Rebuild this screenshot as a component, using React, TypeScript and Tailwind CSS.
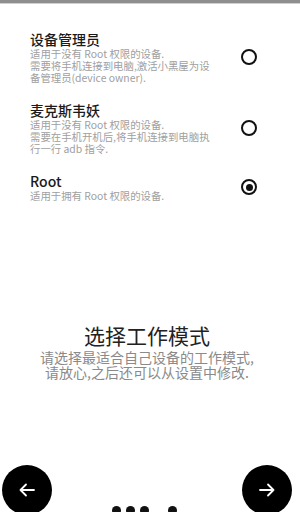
import React from "react";

const items = [
  {
    title: "设备管理员",
    desc: ["适用于没有 Root 权限的设备.", "需要将手机连接到电脑,激活小黑屋为设", "备管理员(device owner)."],
    selected: false,
  },
  {
    title: "麦克斯韦妖",
    desc: ["适用于没有 Root 权限的设备.", "需要在手机开机后,将手机连接到电脑执", "行一行 adb 指令."],
    selected: false,
  },
  {
    title: "Root",
    desc: ["适用于拥有 Root 权限的设备."],
    selected: true,
  },
];

function Radio({ selected }: { selected: boolean }) {
  return (
    <div className="w-[16px] h-[16px] rounded-full border-2 border-[#111] flex items-center justify-center shrink-0">
      {selected && <div className="w-[7px] h-[7px] rounded-full bg-[#111]" />}
    </div>
  );
}

export default function App() {
  return (
    <div
      className="w-[300px] h-[512px] overflow-hidden bg-white flex flex-col"
      style={{ fontFamily: '"Noto Sans CJK SC", "Noto Sans", sans-serif' }}
    >
      <div className="h-[4px] bg-[#8e8e8e] border-b border-[#d0d0d0] shrink-0" />
      <div className="pt-[26px] pl-[30px] pr-[43px] flex flex-col gap-[17px]">
        {items.map((it) => (
          <div key={it.title} className="flex items-center justify-between">
            <div className="flex flex-col">
              <div className="text-[14px] leading-[18px] text-[#1a1a1a] font-medium">{it.title}</div>
              <div className="text-[10.4px] leading-[12px] text-[#a0a0a0]">
                {it.desc.map((d) => (
                  <div key={d} className="whitespace-nowrap">{d}</div>
                ))}
              </div>
            </div>
            <Radio selected={it.selected} />
          </div>
        ))}
      </div>
      <div className="mt-[120px] flex flex-col items-center pr-[6px]">
        <div className="text-[21px] leading-[26px] text-[#222]">选择工作模式</div>
        <div className="mt-[2px] text-[14px] leading-[15px] text-[#8a8a8a] text-center">
          <div className="whitespace-nowrap">请选择最适合自己设备的工作模式,</div>
          <div className="whitespace-nowrap">请放心,之后还可以从设置中修改.</div>
        </div>
      </div>
      <div className="mt-[85px] flex items-end px-[2px] shrink-0">
        <div className="w-[50px] h-[50px] rounded-full bg-black flex items-center justify-center shrink-0">
          <svg width="16" height="14" viewBox="0 0 16 14" fill="none" stroke="white" strokeWidth="1.8" strokeLinecap="round" strokeLinejoin="round">
            <path d="M15 7H1.5M7 1.5L1.5 7L7 12.5" />
          </svg>
        </div>
        <div className="flex-1 flex gap-[5px] pl-[60px]">
          <div className="w-[9px] h-[9px] rounded-full bg-[#111]" />
          <div className="w-[9px] h-[9px] rounded-full bg-[#111]" />
          <div className="w-[9px] h-[9px] rounded-full bg-[#111]" />
          <div className="w-[9px] h-[9px] rounded-full bg-transparent" />
          <div className="w-[9px] h-[9px] rounded-full bg-[#111]" />
        </div>
        <div className="w-[50px] h-[50px] rounded-full bg-black flex items-center justify-center shrink-0 mr-[6px]">
          <svg width="16" height="14" viewBox="0 0 16 14" fill="none" stroke="white" strokeWidth="1.8" strokeLinecap="round" strokeLinejoin="round">
            <path d="M1 7H14.5M9 1.5L14.5 7L9 12.5" />
          </svg>
        </div>
      </div>
    </div>
  );
}
